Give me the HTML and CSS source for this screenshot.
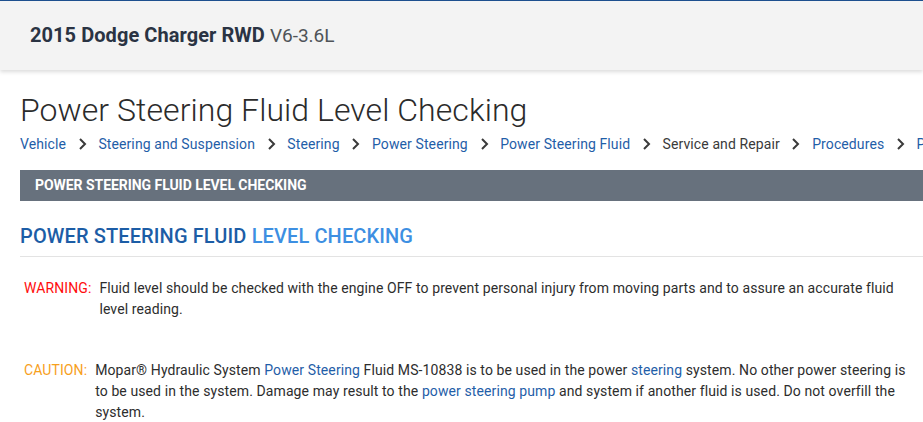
FILE: index.html
```html
<!DOCTYPE html>
<html lang="en">
<head>
<meta charset="utf-8">
<title>Power Steering Fluid Level Checking</title>
<link rel="stylesheet" href="styles.css">
</head>
<body>
<header class="topbar">
  <div class="vehicle-title"><span class="vehicle-name">2015 Dodge Charger RWD</span> <span class="vehicle-engine">V6-3.6L</span></div>
</header>
<main class="page">
  <h1 class="page-title">Power Steering Fluid Level Checking</h1>
  <nav class="crumbs">
    <a class="crumb" href="#">Vehicle</a>
    <svg class="chev" width="9" height="12" viewBox="0 0 9 12"><polyline points="2,1 7,6 2,11" fill="none" stroke="#3a3a3a" stroke-width="2"/></svg>
    <a class="crumb" href="#">Steering and Suspension</a>
    <svg class="chev" width="9" height="12" viewBox="0 0 9 12"><polyline points="2,1 7,6 2,11" fill="none" stroke="#3a3a3a" stroke-width="2"/></svg>
    <a class="crumb" href="#">Steering</a>
    <svg class="chev" width="9" height="12" viewBox="0 0 9 12"><polyline points="2,1 7,6 2,11" fill="none" stroke="#3a3a3a" stroke-width="2"/></svg>
    <a class="crumb" href="#">Power Steering</a>
    <svg class="chev" width="9" height="12" viewBox="0 0 9 12"><polyline points="2,1 7,6 2,11" fill="none" stroke="#3a3a3a" stroke-width="2"/></svg>
    <a class="crumb" href="#">Power Steering Fluid</a>
    <svg class="chev" width="9" height="12" viewBox="0 0 9 12"><polyline points="2,1 7,6 2,11" fill="none" stroke="#3a3a3a" stroke-width="2"/></svg>
    <span class="crumb current">Service and Repair</span>
    <svg class="chev" width="9" height="12" viewBox="0 0 9 12"><polyline points="2,1 7,6 2,11" fill="none" stroke="#3a3a3a" stroke-width="2"/></svg>
    <a class="crumb" href="#">Procedures</a>
    <svg class="chev" width="9" height="12" viewBox="0 0 9 12"><polyline points="2,1 7,6 2,11" fill="none" stroke="#3a3a3a" stroke-width="2"/></svg>
    <a class="crumb" href="#">Power Steering Fluid Level Checking</a>
  </nav>
  <div class="section-bar">POWER STEERING FLUID LEVEL CHECKING</div>
  <h2 class="section-title"><span class="dark">POWER STEERING FLUID</span> <span class="light">LEVEL CHECKING</span></h2>
  <div class="note warning">
    <span class="note-label">WARNING:</span>
    <p class="note-text">Fluid level should be checked with the engine OFF to prevent personal injury from moving parts and to assure an accurate fluid level reading.</p>
  </div>
  <div class="note caution">
    <span class="note-label">CAUTION:</span>
    <p class="note-text">Mopar® Hydraulic System <a href="#">Power Steering</a> Fluid MS-10838 is to be used in the power <a href="#">steering</a> system. No other power steering is to be used in the system. Damage may result to the <a href="#">power steering pump</a> and system if another fluid is used. Do not overfill the system.</p>
  </div>
</main>
</body>
</html>
```

FILE: styles.css
```css
* { box-sizing: border-box; }

html, body {
  margin: 0;
  padding: 0;
  background: #ffffff;
  overflow: hidden;
}

body {
  font-family: Roboto, "Liberation Sans", Arial, sans-serif;
  color: #2f2f2f;
}

a { color: #1f5ea8; text-decoration: none; }

.topbar {
  border-top: 1px solid #1d4f8e;
  height: 70px;
  background: #f3f3f3;
  box-shadow: 0 2px 4px rgba(0, 0, 0, 0.14);
  display: flex;
  align-items: center;
  padding-left: 30px;
  position: relative;
  z-index: 1;
}

.vehicle-title {
  font-size: 20px;
  line-height: 24px;
  white-space: nowrap;
}

.vehicle-name {
  font-weight: 700;
  color: #2a3343;
  letter-spacing: 0.06px;
}

.vehicle-engine {
  font-weight: 400;
  font-size: 19px;
  color: #4f5358;
}

.page {
  padding-left: 20px;
}

.page-title {
  margin: 21px 0 0;
  font-size: 32px;
  line-height: 38px;
  font-weight: 300;
  color: #2b2b2b;
  letter-spacing: 0.06px;
  white-space: nowrap;
}

.crumbs {
  margin-top: 5px;
  display: flex;
  align-items: center;
  gap: 11.7px;
  font-size: 14px;
  line-height: 20px;
  letter-spacing: 0.1px;
  white-space: nowrap;
}

.crumb { flex: none; }
.crumb.current { color: #3a3a3a; }
.chev { flex: none; display: block; }

.section-bar {
  margin-top: 16px;
  height: 31px;
  line-height: 31px;
  background: #67717d;
  color: #ffffff;
  font-size: 14px;
  font-weight: 700;
  letter-spacing: -0.05px;
  padding-left: 15px;
  white-space: nowrap;
}

.section-title {
  margin: 23px 0 0;
  padding-bottom: 8px;
  border-bottom: 1px solid #e3e3e3;
  font-size: 20px;
  line-height: 24px;
  font-weight: 500;
  letter-spacing: 0.12px;
  white-space: nowrap;
}

.section-title .dark { color: #1c5da6; }
.section-title .light { color: #3d8fe2; }

.note {
  display: flex;
  gap: 8px;
  padding: 0 13px 0 4px;
  font-size: 14px;
  line-height: 21px;
  letter-spacing: 0.1px;
}

.note.warning { margin-top: 21px; }
.note.caution { margin-top: 40px; }

.note-label { flex: none; }
.warning .note-label { color: #ff0d0d; }
.caution .note-label { color: #f7a01d; }

.note-text {
  margin: 0;
  flex: 1;
  color: #2d2d2d;
}
```
